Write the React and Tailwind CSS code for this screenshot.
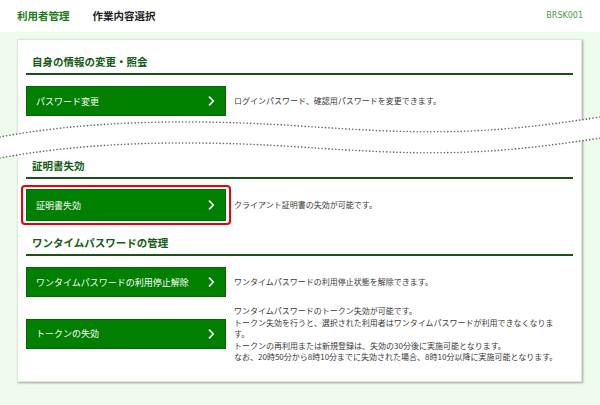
import React from 'react';

const jp = { fontFamily: '"Noto Sans CJK JP", "Noto Sans", sans-serif' };

const Chevron = () => (
  <svg width="7" height="10" viewBox="0 0 7 10" className="shrink-0">
    <path d="M1.5 1.2 L5.3 5 L1.5 8.8" fill="none" stroke="#ffffff" strokeWidth="1.7" strokeLinecap="round" strokeLinejoin="round" />
  </svg>
);

const SectionHeading = ({ label, className }) => (
  <div className={`flex items-end pb-[5px] pl-[6px] border-b-2 border-[#1d4f1d] ${className}`}>
    <span className="text-[10.5px] leading-[12px] font-bold text-[#135c13]">{label}</span>
  </div>
);

const MenuButton = ({ label, h = 'h-[30px]' }) => (
  <button className={`w-[200px] ${h} shrink-0 flex items-center justify-between pl-[9px] pr-[10px] bg-[#007f00] border border-[#006a00] text-white text-[9px] leading-none text-left`}>
    <span>{label}</span>
    <Chevron />
  </button>
);

const Row = ({ label, h, highlight, className = '', children }) => (
  <div className={`flex items-center gap-[8px] ${className}`}>
    <div className="relative shrink-0 flex">
      {highlight && (
        <div className="absolute -left-[5px] -right-[5px] -top-[4px] -bottom-[4px] border-2 border-[#e60012] rounded-[4px]" />
      )}
      <MenuButton label={label} h={h} />
    </div>
    <div className="text-[8px] leading-[11.5px] text-[#3a3a3a]">{children}</div>
  </div>
);

const WaveCut = () => (
  <svg className="absolute left-0 top-0 w-[600px] h-[200px] pointer-events-none" viewBox="0 0 600 200">
    <path
      d="M0,137 C80,122 180,118 300,126 C420,134 480,136 600,117 L600,138 C480,157 420,155 300,147 C180,139 80,143 0,158 Z"
      fill="#ffffff"
    />
    <path d="M0,137 C80,122 180,118 300,126 C420,134 480,136 600,117" fill="none" stroke="#6b6b6b" strokeWidth="1.6" strokeLinecap="round" strokeDasharray="0.1 3.3" />
    <path d="M0,158 C80,143 180,139 300,147 C420,155 480,157 600,138" fill="none" stroke="#6b6b6b" strokeWidth="1.6" strokeLinecap="round" strokeDasharray="0.1 3.3" />
  </svg>
);

export default function App() {
  return (
    <div className="relative w-[600px] h-[405px] overflow-hidden bg-[#edfceb]" style={jp}>
      {/* Header */}
      <div className="h-[32px] bg-white flex items-center pl-[17px] pr-[17px]">
        <span className="text-[10.5px] font-bold text-[#1a7d1a]">利用者管理</span>
        <span className="ml-[23px] text-[10.5px] font-bold text-[#222222]">作業内容選択</span>
        <span className="ml-auto text-[8px] text-[#3c9f3c]" style={{ fontFamily: '"DejaVu Sans", sans-serif' }}>BRSK001</span>
      </div>

      {/* Card */}
      <div className="ml-[17px] mt-[7px] w-[565px] bg-white border border-[#dfe8df] shadow-[1px_1px_2px_rgba(0,0,0,0.35)] px-[8px] pb-[18px]">
        <SectionHeading label="自身の情報の変更・照会" className="h-[35px]" />
        <Row label="パスワード変更" className="mt-[11px]">
          ログインパスワード、確認用パスワードを変更できます。
        </Row>

        <SectionHeading label="証明書失効" className="mt-[35px] h-[28px]" />
        <Row label="証明書失効" h="h-[32px]" highlight className="mt-[10px]">
          クライアント証明書の失効が可能です。
        </Row>

        <SectionHeading label="ワンタイムパスワードの管理" className="h-[35px]" />
        <Row label="ワンタイムパスワードの利用停止解除" className="mt-[11px]">
          ワンタイムパスワードの利用停止状態を解除できます。
        </Row>
        <Row label="トークンの失効" className="mt-[8px]">
          ワンタイムパスワードのトークン失効が可能です。<br />
          トークン失効を行うと、選択された利用者はワンタイムパスワードが利用できなくなりま<br />
          す。<br />
          トークンの再利用または新規登録は、失効の30分後に実施可能となります。<br />
          なお、20時50分から8時10分までに失効された場合、8時10分以降に実施可能となります。
        </Row>
      </div>

      <WaveCut />
    </div>
  );
}
